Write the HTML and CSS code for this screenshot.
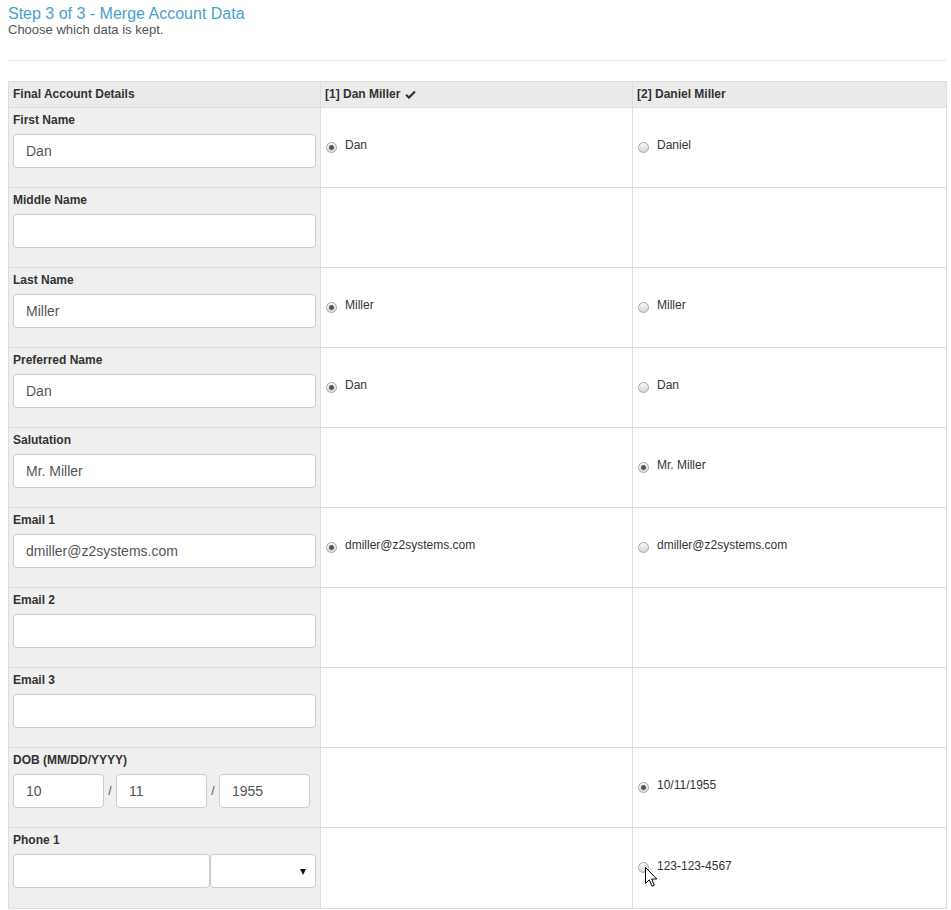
FILE: index.html
```html
<!DOCTYPE html>
<html>
<head>
<meta charset="utf-8">
<link rel="stylesheet" href="styles.css">
</head>
<body>
<div class="page">
  <h2 class="title">Step 3 of 3 - Merge Account Data</h2>
  <p class="subtitle">Choose which data is kept.</p>
  <hr class="rule">
  <table class="merge">
    <colgroup><col class="c1"><col class="c2"><col class="c3"></colgroup>
    <thead>
      <tr>
        <th>Final Account Details</th>
        <th>[1] Dan Miller <svg class="check" viewBox="0 0 12 10" width="11" height="9"><path d="M1 5.2 L4.3 8.4 L11 1.6" fill="none" stroke="#333" stroke-width="2.4"/></svg></th>
        <th>[2] Daniel Miller</th>
      </tr>
    </thead>
    <tbody>
      <tr>
        <td class="field"><label>First Name</label><input class="txt" value="Dan"></td>
        <td class="opt"><span class="choice"><span class="radio on"></span>Dan</span></td>
        <td class="opt"><span class="choice"><span class="radio"></span>Daniel</span></td>
      </tr>
      <tr>
        <td class="field"><label>Middle Name</label><input class="txt" value=""></td>
        <td class="opt"></td>
        <td class="opt"></td>
      </tr>
      <tr>
        <td class="field"><label>Last Name</label><input class="txt" value="Miller"></td>
        <td class="opt"><span class="choice"><span class="radio on"></span>Miller</span></td>
        <td class="opt"><span class="choice"><span class="radio"></span>Miller</span></td>
      </tr>
      <tr>
        <td class="field"><label>Preferred Name</label><input class="txt" value="Dan"></td>
        <td class="opt"><span class="choice"><span class="radio on"></span>Dan</span></td>
        <td class="opt"><span class="choice"><span class="radio"></span>Dan</span></td>
      </tr>
      <tr>
        <td class="field"><label>Salutation</label><input class="txt" value="Mr. Miller"></td>
        <td class="opt"></td>
        <td class="opt"><span class="choice"><span class="radio on"></span>Mr. Miller</span></td>
      </tr>
      <tr>
        <td class="field"><label>Email 1</label><input class="txt" value="dmiller@z2systems.com"></td>
        <td class="opt"><span class="choice"><span class="radio on"></span>dmiller@z2systems.com</span></td>
        <td class="opt"><span class="choice"><span class="radio"></span>dmiller@z2systems.com</span></td>
      </tr>
      <tr>
        <td class="field"><label>Email 2</label><input class="txt" value=""></td>
        <td class="opt"></td>
        <td class="opt"></td>
      </tr>
      <tr>
        <td class="field"><label>Email 3</label><input class="txt" value=""></td>
        <td class="opt"></td>
        <td class="opt"></td>
      </tr>
      <tr>
        <td class="field"><label>DOB (MM/DD/YYYY)</label>
          <div class="dob">
            <input class="txt part" value="10"><span class="slash">/</span><input class="txt part" value="11"><span class="slash">/</span><input class="txt part" value="1955">
          </div>
        </td>
        <td class="opt"></td>
        <td class="opt"><span class="choice"><span class="radio on"></span>10/11/1955</span></td>
      </tr>
      <tr class="phone-row">
        <td class="field"><label>Phone 1</label>
          <div class="phone">
            <input class="txt num" value="">
            <div class="sel"><span class="arrow"></span></div>
          </div>
        </td>
        <td class="opt"></td>
        <td class="opt"><span class="choice cursor-host"><span class="radio"></span>123-123-4567<svg class="cursor" viewBox="0 0 13 21" width="13" height="21"><path d="M0.5 0.5 L0.5 16.5 L4.3 12.8 L7 19.2 L9.3 18.2 L6.7 12 L11.8 12 Z" fill="#fff" stroke="#000" stroke-width="1"/></svg></span></td>
      </tr>
    </tbody>
  </table>
</div>
</body>
</html>
```
FILE: styles.css
```css
html, body {
  margin: 0;
  padding: 0;
  background: #fff;
}
body {
  font-family: "Liberation Sans", Arial, sans-serif;
  font-size: 12px;
  line-height: 17px;
  color: #333;
}
.page {
  padding: 4px 0 0 8px;
  width: 938px;
}
.title {
  margin: 0;
  font-size: 16px;
  line-height: 19px;
  font-weight: normal;
  color: #49a1cb;
}
.subtitle {
  margin: 0;
  font-size: 13px;
  line-height: 14px;
  color: #555;
}
.rule {
  margin: 23px 0 20px 0;
  border: 0;
  border-top: 1px solid #e6e6e6;
  height: 0;
}
.merge {
  border-collapse: collapse;
  table-layout: fixed;
  width: 938px;
}
.c1 { width: 312px; }
.c2 { width: 312px; }
.c3 { width: 314px; }
.merge th, .merge td {
  border: 1px solid #dcdcdc;
  padding: 4px;
  text-align: left;
}
.merge th {
  background: #ebebeb;
  font-weight: bold;
  font-size: 12px;
  line-height: 17px;
  height: 17px;
  color: #333;
}
.check {
  vertical-align: -1px;
  margin-left: 1px;
}
.merge tbody tr {
  height: 80px;
}
.merge tbody tr.phone-row {
  height: 81px;
}
.field {
  background: #efefef;
  vertical-align: top;
}
.field label {
  display: block;
  font-weight: bold;
  color: #333;
  margin-bottom: 5px;
}
.txt {
  display: block;
  box-sizing: border-box;
  width: 100%;
  height: 34px;
  margin: 0;
  padding: 6px 12px;
  border: 1px solid #ccc;
  border-radius: 4px;
  background: #fff;
  font-family: "Liberation Sans", Arial, sans-serif;
  font-size: 14px;
  color: #555;
  outline: none;
}
.dob {
  display: flex;
  align-items: center;
}
.dob .part {
  width: 91px;
  flex: 0 0 91px;
}
.slash {
  width: 12px;
  text-align: center;
  color: #555;
  font-size: 12px;
}
.phone {
  display: flex;
  gap: 0;
}
.phone .num {
  width: 197px;
  flex: 0 0 197px;
}
.sel {
  position: relative;
  box-sizing: border-box;
  width: 106px;
  height: 34px;
  border: 1px solid #ccc;
  border-radius: 4px;
  background: #fff;
}
.arrow {
  position: absolute;
  right: 9px;
  top: 14px;
  width: 0;
  height: 0;
  border-left: 3.5px solid transparent;
  border-right: 3.5px solid transparent;
  border-top: 6px solid #111;
}
.opt {
  vertical-align: middle;
  padding-bottom: 9px;
  background: #fff;
}
.choice {
  display: inline-flex;
  align-items: center;
  font-size: 12px;
  color: #333;
}
.radio {
  display: inline-block;
  box-sizing: border-box;
  width: 11px;
  height: 11px;
  border-radius: 50%;
  border: 1px solid #a9a9a9;
  background: linear-gradient(#f6f6f6, #d9d9d9);
  margin: 3px 8px 0 1px;
  position: relative;
}
.radio.on::after {
  content: "";
  position: absolute;
  left: 2px;
  top: 2px;
  width: 5px;
  height: 5px;
  border-radius: 50%;
  background: #555;
}
.cursor-host {
  position: relative;
}
.cursor {
  position: absolute;
  left: 8px;
  top: 9px;
}
```
